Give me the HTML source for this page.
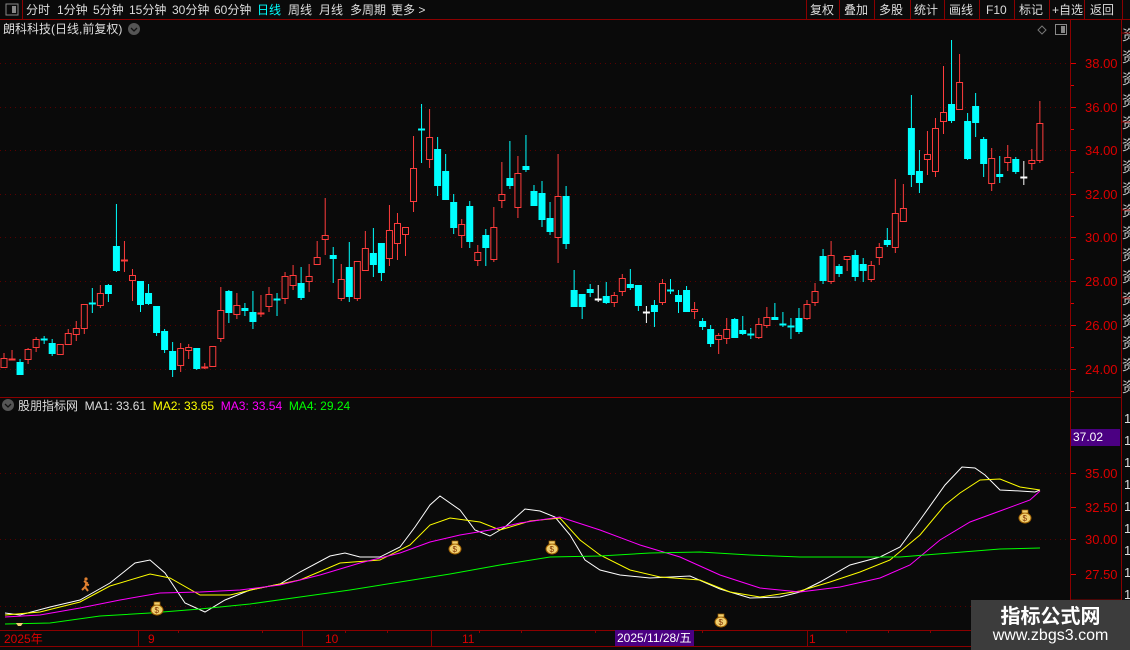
<!DOCTYPE html>
<html><head><meta charset="utf-8"><style>
*{margin:0;padding:0;box-sizing:border-box}
body{width:1130px;height:650px;background:#0a0a0a;overflow:hidden;position:relative;font-family:"Liberation Sans","Noto Sans CJK SC",sans-serif;color:#ddd}
.t{position:absolute;white-space:nowrap;font-size:12px;line-height:14px}
</style></head><body>
<svg id="s" width="1130" height="650" style="position:absolute;left:0;top:0" xmlns="http://www.w3.org/2000/svg"></svg>

<div class="t" style="left:26px;top:3px">分时</div>
<div class="t" style="left:57px;top:3px">1分钟</div>
<div class="t" style="left:93px;top:3px">5分钟</div>
<div class="t" style="left:129px;top:3px">15分钟</div>
<div class="t" style="left:172px;top:3px">30分钟</div>
<div class="t" style="left:214px;top:3px">60分钟</div>
<div class="t" style="left:257px;top:3px;color:#0ff">日线</div>
<div class="t" style="left:288px;top:3px">周线</div>
<div class="t" style="left:319px;top:3px">月线</div>
<div class="t" style="left:350px;top:3px">多周期</div>
<div class="t" style="left:391px;top:3px">更多 &gt;</div>
<div class="t" style="left:810px;top:3px">复权</div>
<div class="t" style="left:844px;top:3px">叠加</div>
<div class="t" style="left:879px;top:3px">多股</div>
<div class="t" style="left:914px;top:3px">统计</div>
<div class="t" style="left:949px;top:3px">画线</div>
<div class="t" style="left:986px;top:3px">F10</div>
<div class="t" style="left:1019px;top:3px">标记</div>
<div class="t" style="left:1052px;top:3px">+自选</div>
<div class="t" style="left:1090px;top:3px">返回</div>
<div class="t" style="left:3px;top:22px">朗科科技(日线,前复权)</div>

<div class="t" style="left:18px;top:399px">股朋指标网 &nbsp;MA1: 33.61 &nbsp;<span style="color:#ff0">MA2: 33.65</span> &nbsp;<span style="color:#f0f">MA3: 33.54</span> &nbsp;<span style="color:#0f0">MA4: 29.24</span></div>

<div class="t" style="left:1071px;top:429px;width:49px;height:17px;background:#4b0082;color:#fff;padding-left:2px;line-height:17px">37.02</div>

<div class="t" style="left:4px;top:632px;color:#d00">2025年</div>
<div class="t" style="left:148px;top:632px;color:#d00">9</div>
<div class="t" style="left:325px;top:632px;color:#d00">10</div>
<div class="t" style="left:462px;top:632px;color:#d00">11</div>
<div class="t" style="left:615px;top:630px;width:79px;height:16px;background:#4b0082;color:#fff;line-height:16px;padding-left:2px">2025/11/28/五</div>
<div class="t" style="left:809px;top:632px;color:#d00">1</div>

<div style="position:absolute;left:971px;top:600px;width:159px;height:50px;background:#3c3c3c;text-align:center">
<div style="font-size:20px;font-weight:bold;color:#fff;line-height:24px;margin-top:3px;font-family:'Noto Sans CJK SC',sans-serif">指标公式网</div>
<div style="font-size:16px;color:#fff;line-height:18px">www.zbgs3.com</div></div>

<script>
var s=document.getElementById('s'),h='';
function L(x1,y1,x2,y2,c,w,d){h+='<line x1="'+x1+'" y1="'+y1+'" x2="'+x2+'" y2="'+y2+'" stroke="'+c+'" stroke-width="'+(w||1)+'"'+(d?' stroke-dasharray="'+d+'"':'')+'/>';}
function R(x,y,w,hh,f,st){h+='<rect x="'+x+'" y="'+y+'" width="'+w+'" height="'+hh+'" fill="'+f+'"'+(st?' stroke="'+st+'"':'')+'/>';}
function T(x,y,t,c,sz){h+='<text x="'+x+'" y="'+y+'" fill="'+c+'" font-size="'+(sz||12)+'" font-family="Liberation Sans,Noto Sans CJK SC,sans-serif">'+t+'</text>';}
var dk='#8b0000';
L(0,19.5,1130,19.5,dk);L(22.5,0,22.5,19,dk);
R(6,4,12,11,'#0a0a0a','#888');R(12,6,4,7,'#888');
[806,839,874,910,944,979,1014,1049,1084,1122].forEach(function(x){L(x+.5,0,x+.5,19,dk)});
h+='<circle cx="134" cy="29" r="6" fill="#555"/><path d="M131 28l3 3 3-3" stroke="#111" fill="none" stroke-width="1.3"/>';
h+='<path d="M1042 26l4 4-4 4-4-4z" stroke="#777" fill="none"/>';R(1055.5,24.5,11,10,'none','#888');R(1061,26,4,7,'#888');
L(1070.5,20,1070.5,647,dk);L(1121.5,20,1121.5,650,dk);L(0,397.5,1121,397.5,dk);
L(0,630.5,1070,630.5,dk);L(0,646.5,1070,646.5,dk);L(1071,600,1121,600,dk);
var py=[63,107,150,194,237,281,325,369],pl=['38.00','36.00','34.00','32.00','30.00','28.00','26.00','24.00'];
py.forEach(function(y,i){L(0,y+.5,1066,y+.5,'#5a0000',1,'1 4');L(1071,y+.5,1076,y+.5,'#d00');L(1071,y+22.5,1074,y+22.5,'#d00');T(1085,y+5,pl[i],'#d00',13)});
for(var y=30;y<390;y+=22){T(1122,y+10,'资','#ccc',14);}
[33,122,210,298].forEach(function(y){L(1122,y,1130,y,dk)});
for(var y=415;y<600;y+=22){T(1124,y+8,'1','#ddd',13);}
[473,539,606].forEach(function(y){L(0,y+.5,1066,y+.5,'#5a0000',1,'1 4')});
[[473,'35.00'],[507,'32.50'],[539,'30.00'],[574,'27.50']].forEach(function(a){L(1071,a[0]+.5,1076,a[0]+.5,'#d00');T(1085,a[0]+5,a[1],'#d00',13)});
[138,302,431,807].forEach(function(x){L(x+.5,630,x+.5,646,dk)});
[178,262,345,387,479,521,595,702,846,888,930].forEach(function(x){L(x+.5,630,x+.5,633,dk)});
var C=[[358,368,353,368,'r'],[359,360,350,360,'r'],[362,375,359,375,'c'],[349,360,348,364,'r'],[339,348,337,352,'r'],[339,341,336,344,'c'],[343,354,339,356,'c'],[344,355,344,355,'r'],[333,345,329,345,'r'],[328,335,321,341,'r'],
[304,329,304,334,'r'],[303,304,288,313,'c'],[293,306,285,308,'r'],[285,294,284,302,'c'],[246,271,204,272,'c'],[260,262,241,272,'r'],[275,281,269,301,'r'],[281,305,281,312,'c'],[293,304,284,305,'c'],[306,333,306,336,'c'],
[331,350,329,353,'c'],[351,370,342,377,'c'],[348,366,343,372,'r'],[347,351,344,359,'r'],[348,369,348,370,'c'],[367,369,363,369,'r'],[346,367,346,367,'r'],[310,339,287,342,'r'],[291,313,290,323,'c'],[305,315,293,319,'r'],
[308,311,303,316,'c'],[312,322,291,329,'c'],[313,314,295,317,'r'],[294,307,287,312,'r'],[299,301,293,316,'c'],[276,299,272,304,'r'],[275,286,265,290,'r'],[283,298,267,300,'c'],[276,282,264,292,'r'],[257,265,241,265,'r'],
[235,240,198,255,'r'],[255,259,247,283,'c'],[279,299,264,301,'r'],[267,297,242,302,'c'],[261,299,261,301,'r'],[248,271,231,271,'r'],[253,265,228,277,'c'],[243,273,243,281,'c'],[230,259,205,266,'r'],[223,244,213,260,'r'],
[227,235,227,256,'r'],[168,202,136,212,'r'],[129,131,104,163,'c'],[137,160,109,168,'r'],[149,186,137,196,'c'],[171,200,154,200,'c'],[202,228,194,234,'c'],[224,236,219,248,'r'],[206,242,201,248,'c'],[252,261,245,266,'r'],
[235,248,229,266,'c'],[227,260,207,262,'r'],[194,201,162,208,'r'],[178,186,141,189,'c'],[173,208,156,218,'r'],[166,170,135,172,'c'],[191,206,185,206,'c'],[193,220,181,227,'c'],[218,232,202,235,'c'],[196,238,154,263,'r'],
[196,244,186,249,'c'],[290,307,270,307,'c'],[294,307,294,319,'c'],[289,293,284,297,'c'],[299,300,285,302,'w'],[296,303,282,304,'c'],[295,303,292,307,'r'],[278,292,274,296,'r'],[284,288,269,290,'c'],[285,306,285,311,'c'],
[312,313,306,323,'w'],[305,312,300,327,'c'],[283,303,279,305,'r'],[290,292,279,294,'c'],[295,302,290,313,'c'],[290,312,286,312,'c'],[309,312,302,319,'r'],[321,327,318,330,'c'],[329,344,325,347,'c'],[335,340,333,354,'r'],
[329,339,318,344,'r'],[319,338,318,338,'c'],[330,334,316,335,'c'],[334,336,328,339,'c'],[324,338,318,339,'r'],[317,326,307,328,'r'],[317,320,303,320,'c'],[324,326,312,327,'c'],[326,328,318,339,'c'],[318,332,308,334,'c'],
[304,319,300,320,'r'],[291,303,283,306,'r'],[256,281,249,284,'c'],[255,282,241,284,'r'],[266,274,264,277,'c'],[256,260,256,271,'r'],[255,277,250,281,'c'],[264,271,258,282,'c'],[265,280,261,282,'r'],[247,258,243,265,'r'],
[240,245,228,247,'c'],[213,248,179,253,'r'],[208,222,184,222,'r'],[128,175,95,187,'c'],[171,183,150,193,'c'],[154,160,131,175,'r'],[128,172,118,177,'r'],[112,122,66,134,'r'],[104,121,40,123,'c'],[82,110,54,110,'r'],
[121,159,113,160,'c'],[106,123,93,137,'c'],[139,164,137,177,'c'],[158,184,148,191,'r'],[174,177,156,183,'c'],[157,163,145,171,'r'],[159,172,157,174,'c'],[177,179,161,185,'w'],[160,164,149,170,'r'],[123,161,101,163,'r']];
C.forEach(function(c,i){var x=4+8.03*i,col=c[4]=='r'?'#ff3c3c':c[4]=='c'?'#00ffff':'#fff';
 L(x,c[2],x,c[3],col);
 var bh=c[1]-c[0];
 if(bh<=2){L(x-3.5,c[0]+.5,x+3.5,c[0]+.5,col,2);}
 else if(c[4]=='r'){R(x-3,c[0]+.5,6,bh-1,'#0a0a0a',col);}
 else R(x-3.5,c[0],7,bh,col);
});
function P(pts,c){h+='<polyline fill="none" stroke="'+c+'" stroke-width="1" points="'+pts+'"/>';}
P('5,613 20,615 50,607 80,600 110,583 135,563 150,560 165,573 185,603 205,612 225,600 250,590 280,584 300,572 330,556 345,553 360,557 380,557 400,547 415,527 430,505 440,496 460,510 475,530 490,536 505,527 525,509 540,511 555,517 570,535 585,560 600,570 620,575 650,578 690,576 720,589 750,598 780,597 800,592 820,582 850,565 880,557 900,547 920,520 945,485 962,467 975,468 985,475 1000,490 1020,491 1035,492 1040,490','#fff');
P('5,615 40,612 80,602 110,586 150,574 170,578 200,595 230,595 260,588 300,580 340,563 380,560 410,545 430,525 450,518 480,522 500,530 530,521 560,518 580,540 600,555 630,570 660,577 700,580 730,592 760,597 800,591 830,582 860,572 890,560 920,535 945,505 960,493 980,480 1000,479 1020,487 1040,490','#ff0');
P('5,617 40,615 80,608 120,600 160,593 200,592 240,590 280,585 320,575 360,563 400,553 430,542 460,535 490,530 520,523 560,517 600,530 640,545 680,557 720,575 760,588 800,592 840,587 880,578 910,565 940,540 970,522 1000,511 1030,500 1040,491','#f0f');
P('5,624 50,623 100,616 150,613 200,609 250,604 300,597 350,590 400,582 450,574 500,565 550,557 600,556 650,553 700,552 750,555 800,557 850,557 900,557 950,553 1000,549 1040,548','#0f0');
function bag(x,y){h+='<ellipse cx="'+x+'" cy="'+(y+3)+'" rx="6" ry="5" fill="#f0d070" stroke="#a06000"/><rect x="'+(x-3)+'" y="'+(y-5)+'" width="6" height="3" fill="#f0d070" stroke="#a06000" stroke-width=".7"/><text x="'+(x-2.5)+'" y="'+(y+6)+'" font-size="8" fill="#803000" font-family="Liberation Sans">$</text>';}
bag(157,607);bag(455,546);bag(552,546);bag(721,619);bag(1025,515);
h+='<path d="M84 581l3 2-2 4 3 4M85 587l-3 3M85 584l4 1" stroke="#e08030" stroke-width="2" fill="none"/><circle cx="86" cy="579" r="1.6" fill="#e08030"/>';
h+='<path d="M16 623h7l-2 3h-3z" fill="#f0d070"/>';
h+='<circle cx="8" cy="405" r="6" fill="#555"/><path d="M5 404l3 3 3-3" stroke="#111" fill="none" stroke-width="1.3"/>';
s.innerHTML=h;
</script>
</body></html>
